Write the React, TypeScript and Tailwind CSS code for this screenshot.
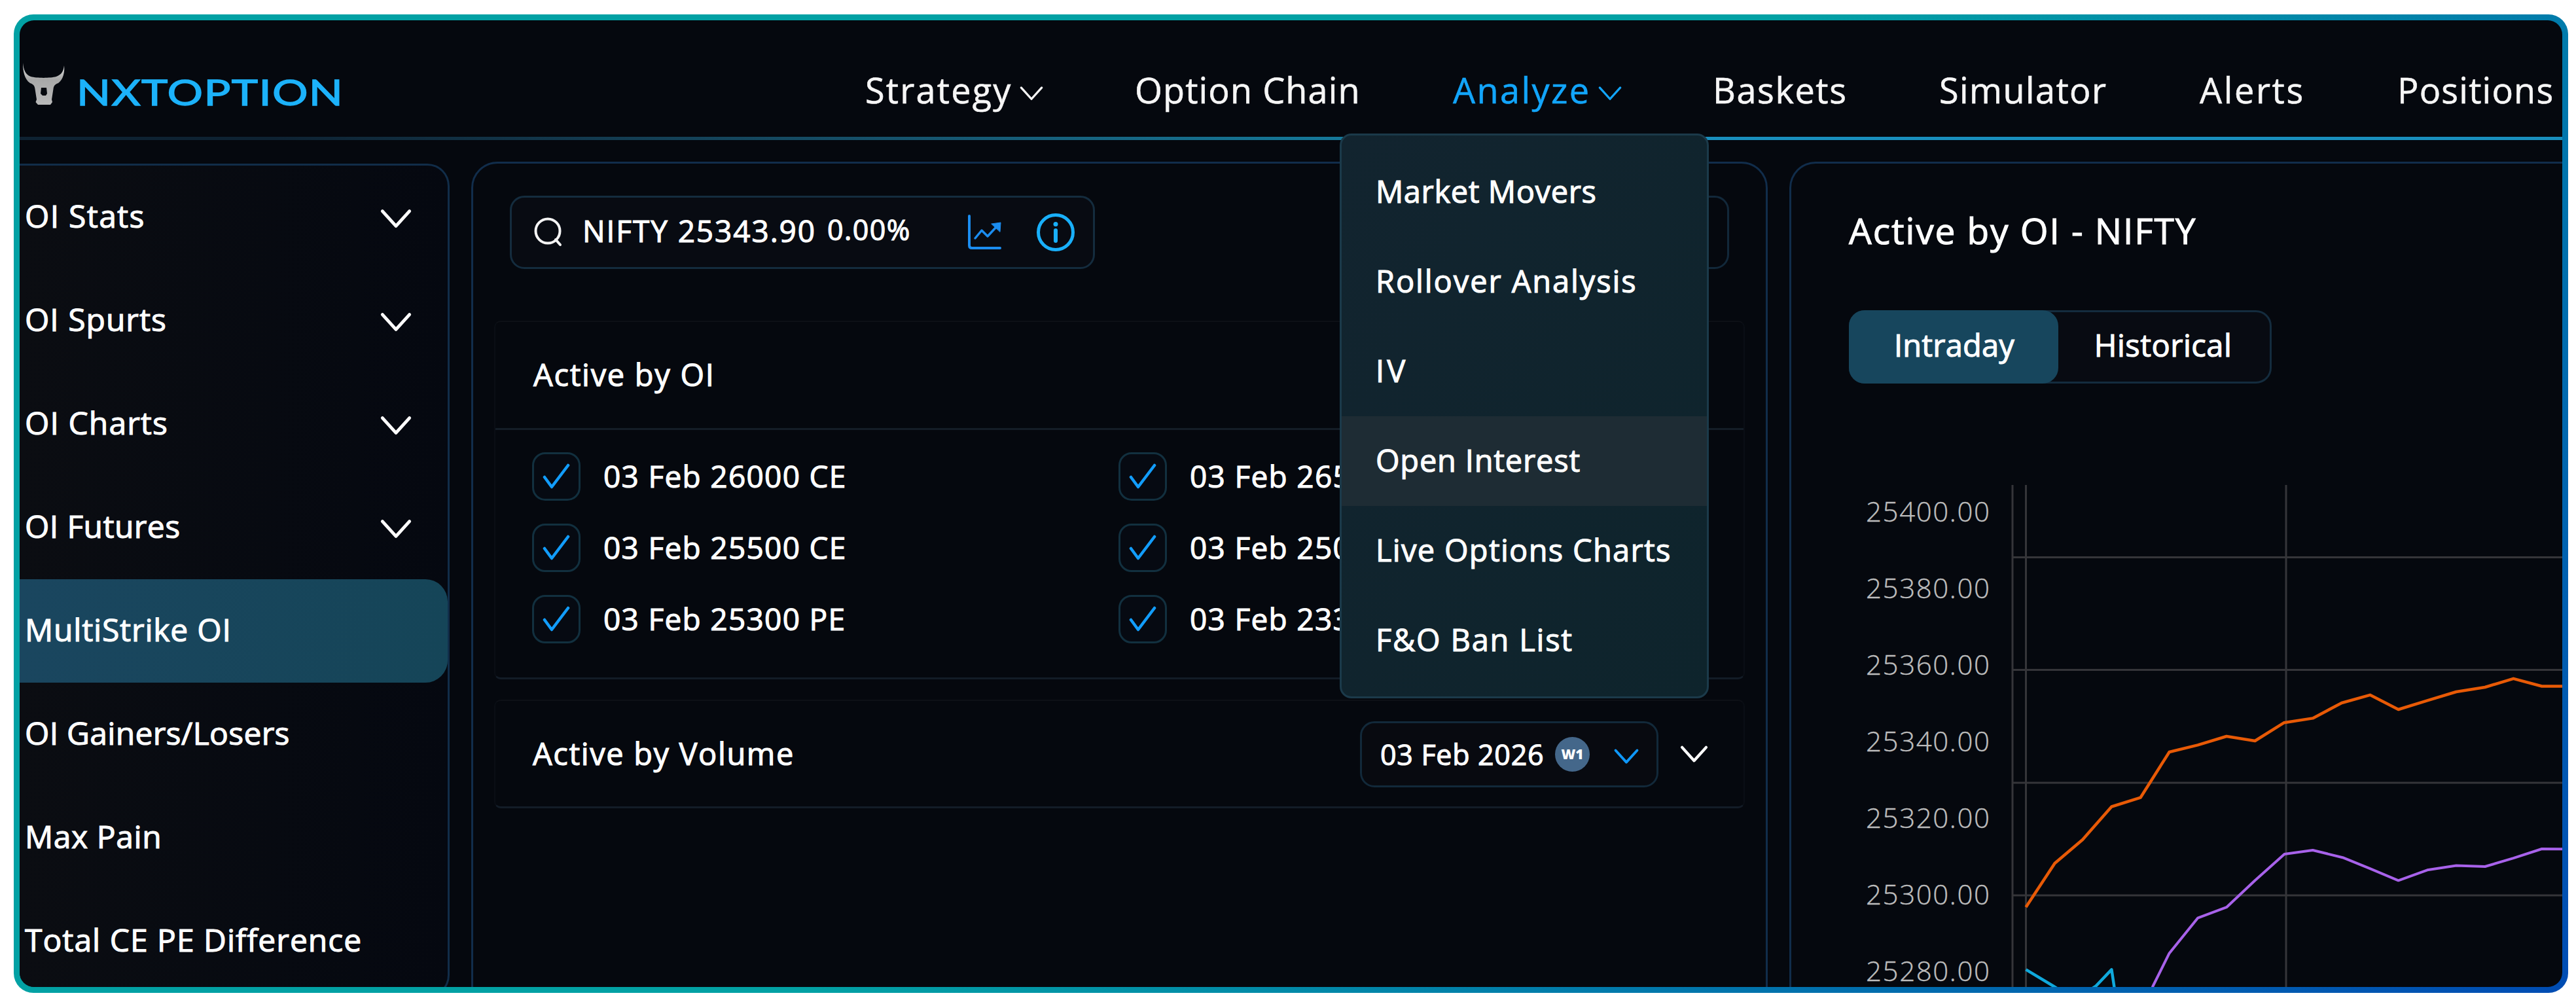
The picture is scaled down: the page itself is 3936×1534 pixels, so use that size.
// App.tsx
import type { ReactNode } from "react";
import clsx from "clsx";

interface NavItem {
  label: string;
  width: string;
  tracking: string;
  hasMenu?: boolean;
  active?: boolean;
}

const NAV_ITEMS: NavItem[] = [
  { label: "Strategy", width: "w-[412px]", tracking: "tracking-[2.2px]", hasMenu: true },
  { label: "Option Chain", width: "w-[486px]", tracking: "tracking-[1.1px]" },
  { label: "Analyze", width: "w-[397px]", tracking: "tracking-[2.4px]", hasMenu: true, active: true },
  { label: "Baskets", width: "w-[346px]", tracking: "tracking-[1.6px]" },
  { label: "Simulator", width: "w-[398px]", tracking: "tracking-[1.4px]" },
  { label: "Alerts", width: "w-[302px]", tracking: "tracking-[2.6px]" },
  { label: "Positions", width: "w-[252px]", tracking: "tracking-[1.2px]" },
];

const ANALYZE_MENU = [
  { label: "Market Movers", tracking: "tracking-[0.6px]" },
  { label: "Rollover Analysis", tracking: "tracking-[1.9px]" },
  { label: "IV", tracking: "tracking-[4px]" },
  { label: "Open Interest", tracking: "tracking-[0.8px]" },
  { label: "Live Options Charts", tracking: "tracking-[1.3px]" },
  { label: "F&O Ban List", tracking: "tracking-[1.8px]" },
];

const SIDEBAR = [
  { label: "OI Stats", tracking: "tracking-[1.3px]", expandable: true },
  { label: "OI Spurts", tracking: "tracking-[1px]", expandable: true },
  { label: "OI Charts", tracking: "tracking-[1.1px]", expandable: true },
  { label: "OI Futures", tracking: "tracking-[0.4px]", expandable: true },
  { label: "MultiStrike OI", tracking: "tracking-[0.8px]", active: true },
  { label: "OI Gainers/Losers", tracking: "tracking-[0.3px]" },
  { label: "Max Pain", tracking: "tracking-[0.6px]" },
  { label: "Total CE PE Difference", tracking: "tracking-[1px]" },
];

const STRIKES = [
  "03 Feb 26000 CE",
  "03 Feb 26500 CE",
  "03 Feb 25500 CE",
  "03 Feb 25000 PE",
  "03 Feb 25300 PE",
  "03 Feb 23300 PE",
];

const Y_LABELS = [
  "25400.00",
  "25380.00",
  "25360.00",
  "25340.00",
  "25320.00",
  "25300.00",
  "25280.00",
];

function Chevron({ className, stroke = 4.5 }: { className?: string; stroke?: number }) {
  return (
    <svg viewBox="0 0 46 30" className={className} fill="none" stroke="currentColor" strokeWidth={stroke} strokeLinecap="round" strokeLinejoin="round">
      <path d="M4 4 L23 25 L42 4" />
    </svg>
  );
}

function BullLogo() {
  return (
    <svg viewBox="0 0 66 66" className="-mt-2.5 h-[66px] w-[66px]">
      <defs>
        <linearGradient id="bull" x1="0" y1="0" x2="0" y2="1">
          <stop offset="0" stopColor="#e8e8e8" />
          <stop offset="0.4" stopColor="#a8a8a8" />
          <stop offset="1" stopColor="#b9b9b9" />
        </linearGradient>
      </defs>
      <path
        fill="url(#bull)"
        fillRule="evenodd"
        d="M1 1 C2 12 5 19 13 22 C22 24.500 43 24.500 52 22 C60 19 63 14 64 5 C65 15 63 26 55 32 C49 34 48 37 47.500 41 L45 57 L46 61 L43 65 L24 65 L20.500 61 L22 57 L19.500 41 C19 37 18 34 12 32 C3 26 1 13 1 1 Z M29 39 L28 48 L31 51 L36 51 L38 48 L37 39 Z"
      />
    </svg>
  );
}

function Header() {
  return (
    <header className="flex h-[178px] shrink-0 items-center">
      <div className="ml-1 flex items-center gap-[17px] pt-[26px]">
        <BullLogo />
        <div className="w-[410px] pt-[15px]">
          <span className="inline-block origin-left scale-x-[1.24] font-[Lato] text-[55px] leading-none tracking-[0.02em] text-[#1cb2fa] [-webkit-text-stroke:1.4px_#1cb2fa]">
            NXTOPTION
          </span>
        </div>
      </div>
      <nav className="ml-auto flex items-center pt-[34px] text-[54px] leading-[60px] whitespace-nowrap [-webkit-text-stroke:0.6px]">
        {NAV_ITEMS.map((item) => (
          <a
            key={item.label}
            className={clsx("flex items-center gap-[11px]", item.width, item.active ? "text-[#12a5fb]" : "text-[#f6f6f6]")}
          >
            <span className={item.tracking}>{item.label}</span>
            {item.hasMenu && <Chevron stroke={4} className="mt-3 h-[26px] w-[38px]" />}
          </a>
        ))}
      </nav>
    </header>
  );
}

function AnalyzeMenu() {
  return (
    <div className="absolute top-[173px] left-[2017px] h-[863px] w-[564px] rounded-[18px] border-[3px] border-[#1b3a4a] bg-linear-to-br from-[#12242f] to-[#0e242c] py-[18px]">
      {ANALYZE_MENU.map((item) => (
        <div
          key={item.label}
          className={clsx(
            "flex h-[137px] items-center pb-[3px] pl-[52px] text-[47px] font-medium whitespace-nowrap text-white",
            item.tracking,
            item.label === "Open Interest" && "bg-[#1e2c34]",
          )}
        >
          {item.label}
        </div>
      ))}
    </div>
  );
}

function Sidebar() {
  return (
    <aside className="h-[1274px] w-[657px] shrink-0 rounded-r-[34px] border-y-[3px] border-r-[3px] border-[#112d49] bg-linear-to-r from-[#0b0d12] to-[#050810]">
      {SIDEBAR.map((item) => (
        <div
          key={item.label}
          className={clsx(
            "flex h-[158px] items-center justify-between pr-[54px] pl-[8px] text-[48px] font-medium whitespace-nowrap text-white",
            item.active && "rounded-r-[34px] bg-linear-to-r from-[#1a465f] to-[#154558]",
          )}
        >
          <span className={clsx("-mt-1", item.tracking)}>{item.label}</span>
          {item.expandable && <Chevron className="mt-1 h-[33px] w-[50px]" />}
        </div>
      ))}
    </aside>
  );
}

function SearchIcon() {
  return (
    <svg viewBox="0 0 44 46" className="h-[46px] w-[44px]" fill="none" stroke="#f4f4f4" strokeWidth="4" strokeLinecap="round">
      <circle cx="22" cy="21" r="18.500" />
      <path d="M34 34 L41 42" />
    </svg>
  );
}

function TrendIcon() {
  return (
    <svg viewBox="0 0 54 54" className="h-[54px] w-[54px]" fill="none" stroke="#1b8df0" strokeWidth="4" strokeLinecap="round" strokeLinejoin="round">
      <path d="M3 2 V47 Q3 51 7 51 H50" />
      <path d="M12 36 L22 24 L31 33 L45 18" strokeWidth="3.500" />
      <path d="M37 14 L51 12 L50 26 Z" fill="#1b8df0" strokeWidth="1" />
    </svg>
  );
}

function InfoIcon() {
  return (
    <svg viewBox="0 0 60 60" className="h-[60px] w-[60px]" fill="none" stroke="#19b0fb" strokeWidth="5">
      <circle cx="30" cy="30" r="26.500" />
      <path d="M30 27 V43" strokeLinecap="round" strokeWidth="6" />
      <circle cx="30" cy="17.500" r="3.500" fill="#19b0fb" stroke="none" />
    </svg>
  );
}

function Checkbox() {
  return (
    <span className="flex h-[74px] w-[74px] shrink-0 items-center justify-center rounded-[20px] border-[3px] border-[#12303f] bg-[#060a12]">
      <svg viewBox="0 0 42 40" className="h-10 w-[42px]" fill="none" stroke="#129dfc" strokeWidth="4.500" strokeLinecap="round" strokeLinejoin="round">
        <path d="M3 21 L14 36 L39 3" />
      </svg>
    </span>
  );
}

function Card({ children, className }: { children: ReactNode; className?: string }) {
  return (
    <div className={clsx("rounded-[10px] border-x-2 border-t-2 border-b-[3px] border-x-[#0a0e15] border-t-[#0d1016] border-b-[#131c27]", className)}>
      {children}
    </div>
  );
}

function StrikePanel() {
  return (
    <section className="h-[1340px] w-[1981px] shrink-0 rounded-[40px] border-[3px] border-[#112d4b] px-[32px] pt-[49px]">
      <div className="flex justify-between px-[24px]">
        <div className="flex h-[112px] w-[894px] items-center rounded-[22px] border-[3px] border-[#142c3e] bg-[#080b12] pl-[33px] whitespace-nowrap text-white">
          <SearchIcon />
          <span className="mb-1.5 ml-[31px] w-[374px] text-[46px] leading-none font-medium tracking-[1.9px]">NIFTY 25343.90</span>
          <span className="mb-2.5 w-[214px] text-[43px] leading-none font-medium tracking-[1.4px]">0.00%</span>
          <TrendIcon />
          <span className="ml-[51px]">
            <InfoIcon />
          </span>
        </div>
        <div className="h-[112px] w-[380px] rounded-[22px] border-[3px] border-[#12283a]" />
      </div>

      <Card className="mt-[79px] h-[548px]">
        <div className="flex h-[165px] items-center border-b-[3px] border-[#141d27] pb-0.5 pl-[58px] text-[47px] font-medium tracking-[1.7px] text-white">
          Active by OI
        </div>
        <div className="grid grid-cols-[896px_890px] gap-y-[35px] pt-[34px] pl-[56px]">
          {STRIKES.map((strike) => (
            <div key={strike} className="flex items-center gap-[35px] text-[46px] leading-none font-medium tracking-[1.3px] whitespace-nowrap text-white">
              <Checkbox />
              <span className="-mt-[3px]">{strike}</span>
            </div>
          ))}
        </div>
      </Card>

      <Card className="mt-[31px] flex h-[166px] items-center pr-[53px] pl-[57px] whitespace-nowrap text-white">
        <span className="text-[47px] font-medium tracking-[1.6px]">Active by Volume</span>
        <div className="mt-0.5 ml-auto flex h-[101px] w-[456px] items-center rounded-[22px] border-[3px] border-[#12293a] bg-[#080a10] pl-[28px]">
          <span className="w-[267px] text-[43px] leading-none font-medium tracking-[0.7px]">03 Feb 2026</span>
          <span className="flex h-[53px] w-[53px] items-center justify-center rounded-full bg-[#44678a] text-[21px] font-extrabold [-webkit-text-stroke:0px]">
            W1
          </span>
          <Chevron className="mt-1.5 ml-[36px] h-[26px] w-[40px] text-[#0e98fb]" />
        </div>
        <Chevron className="mt-0.5 ml-[32px] h-[29px] w-[45px]" />
      </Card>
    </section>
  );
}

function Chart() {
  return (
    <div className="flex h-[800px]">
      <div className="-mt-[19px] flex w-[244px] flex-col pl-[26px] text-[42px] leading-[117px] font-light tracking-[1.6px] text-[#bdbdbd] [-webkit-text-stroke:0.4px]">
        {Y_LABELS.map((label) => (
          <span key={label} className="h-[117px] shrink-0">
            {label}
          </span>
        ))}
      </div>
      <svg viewBox="0 0 850 800" className="h-[800px] w-[850px] shrink-0" fill="none" strokeLinejoin="round">
        <g stroke="#353539" strokeWidth="3">
          <path d="M6 0 V800 M26.500 0 V800 M424 0 V800" />
          <path d="M6 110.500 H850 M6 282.500 H850 M6 455 H850 M6 627 H850" />
        </g>
        <polyline
          stroke="#e85a06"
          strokeWidth="4.500"
          points="26.5,645 70.6,578 113,542 157.400,491.500 201.500,477.700 245.600,408 289,397.400 333,384 376.500,391 420.600,363.300 464.800,356.400 509,333 552.300,320.800 595.600,343 639.800,329.300 684,316 728,309 771.400,295.800 814.800,307.500 850,307.500"
        />
        <polyline
          stroke="#a862ea"
          strokeWidth="4"
          points="209,800 220.400,766 245.600,715.400 289,661.700 333,645.200 376.500,604.300 421.500,564 464.800,558 510.500,569.200 552.300,586.200 595.600,604.300 639.800,588.300 684,581.400 728,583 771.400,570.200 814.800,556 850,556.400"
        />
        <polyline stroke="#10a9dc" strokeWidth="4.500" points="26.5,740.400 69,766 101,786 133,766 157.400,740.400 161.300,766 166,800" />
      </svg>
    </div>
  );
}

function ChartPanel() {
  return (
    <section className="h-[1340px] w-[1240px] shrink-0 overflow-hidden rounded-tl-[40px] border-t-[3px] border-l-[3px] border-[#112d4b] pt-[72px] pl-[88px]">
      <h2 className="h-[60px] text-[55px] leading-[60px] tracking-[1.9px] whitespace-nowrap text-white">Active by OI - NIFTY</h2>
      <div className="mt-[92px] flex h-[112px] w-[646px] rounded-[24px] border-[3px] border-[#142c3e] bg-[#080b12] text-[47px] font-medium text-white">
        <div className="-m-[3px] flex w-[320px] items-center justify-center rounded-[24px] bg-[#17465d] pb-[5px] pl-0.5 tracking-[0.2px]">Intraday</div>
        <div className="flex flex-1 items-center justify-center pb-[5px] tracking-[0.5px]">Historical</div>
      </div>
      <div className="pt-[155px]">
        <Chart />
      </div>
    </section>
  );
}

export default function App() {
  return (
    <div className="h-[1534px] w-[3936px] overflow-hidden bg-white pt-[22px] pl-[21px] font-['Open_Sans',sans-serif] [-webkit-text-stroke:1.1px]">
      <div className="h-[1495px] w-[3903px] rounded-[30px] bg-[linear-gradient(135deg,#02a1a4_50%,#004cb3_100%)] p-[9px]">
        <div className="relative flex h-full w-full flex-col overflow-hidden rounded-[22px] bg-[#05080e]">
          <Header />
          <div className="h-[5px] shrink-0 bg-linear-to-r from-[#0e2232] from-10% via-[#157595] via-50% to-[#198fbd] to-65%" />
          <div className="flex shrink-0 items-start">
            <div className="pt-[36px]">
              <Sidebar />
            </div>
            <div className="flex gap-[33px] pt-[33px] pl-[33px]">
              <StrikePanel />
              <ChartPanel />
            </div>
          </div>
          <AnalyzeMenu />
        </div>
      </div>
    </div>
  );
}
